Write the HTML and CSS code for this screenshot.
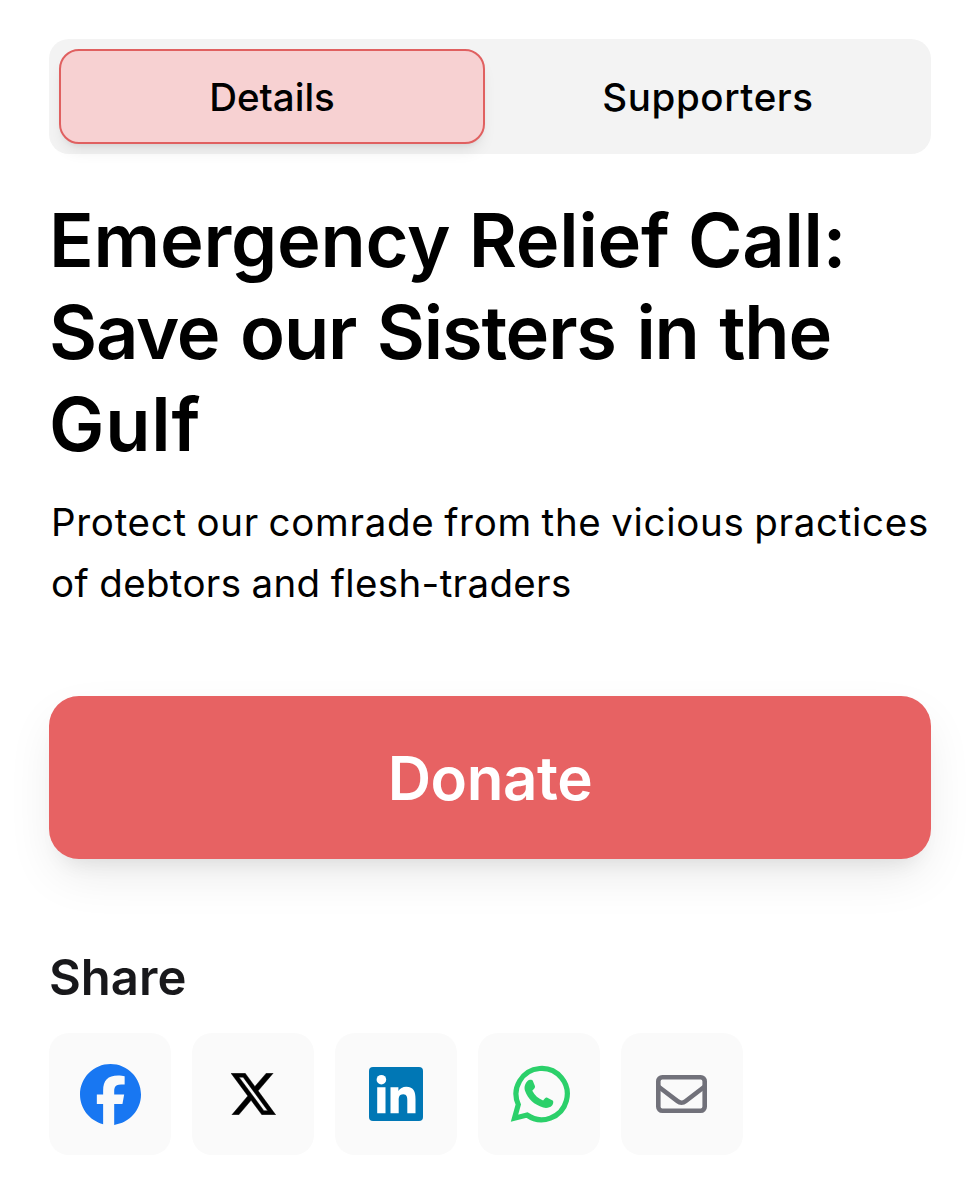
FILE: index.html
```html
<!DOCTYPE html>
<html lang="en">
<head>
  <meta charset="UTF-8">
  <title>Emergency Relief Call</title>
  <link rel="stylesheet" href="styles.css">
</head>
<body>
  <div class="tabs">
    <button class="tab active">Details</button>
    <button class="tab tab-wide">Supporters</button>
  </div>

  <h1>Emergency Relief Call:<br><span class="tight">Save our Sisters in the</span><br><span class="loose">Gulf</span></h1>
  <p class="summary">Protect our comrade from the vicious practices<br><span class="summary-end">of debtors and flesh-traders</span></p>

  <button class="donate">Donate</button>

  <h2>Share</h2>
  <div class="share-list">
    <a class="share-item" aria-label="Facebook">
      <svg width="61" height="61" viewBox="0 0 24 24" fill="#1877f2">
        <path d="M9.101 23.691v-7.98H6.627v-3.667h2.474v-1.58c0-4.085 1.848-5.978 5.858-5.978.401 0 .955.042 1.468.103a8.68 8.68 0 0 1 1.141.195v3.325a8.623 8.623 0 0 0-.653-.036 26.805 26.805 0 0 0-.733-.009c-.707 0-1.259.096-1.675.309a1.686 1.686 0 0 0-.679.622c-.258.42-.374.995-.374 1.752v1.297h3.919l-.386 2.103-.287 1.564h-3.246v8.245C19.396 23.238 24 18.179 24 12.044c0-6.627-5.373-12-12-12s-12 5.373-12 12c0 5.628 3.874 10.35 9.101 11.647Z"/>
      </svg>
    </a>
    <a class="share-item" aria-label="X">
      <svg width="45" height="42" viewBox="-1 -1 302 273" preserveAspectRatio="none">
        <path d="m236 0h46l-101 115 118 156h-92.6l-72.5-94.8-83 94.8h-46l107-123-113-148h94.9l65.5 86.6zm-16.1 244h25.5l-165-218h-27.4z" stroke="#000" stroke-width="3"/>
      </svg>
    </a>
    <a class="share-item" aria-label="LinkedIn">
      <svg width="54" height="54" viewBox="0 0 54 54">
        <rect width="54" height="54" rx="4" fill="#0077b5"/>
        <g fill="#fff">
          <circle cx="12.4" cy="12.7" r="4.8"/>
          <path d="M8.2 20.3h8.3V46.3H8.2zM21.5 20.3h7.9V24c1.5-2.6 4.3-4.2 7.8-4.2 7.7 0 9.3 5 9.3 12.2v14.3h-8.2V33.5c0-3.1-.3-6.3-4.1-6.3-3.9 0-4.5 2.9-4.5 6.1v13h-8.2z"/>
        </g>
      </svg>
    </a>
    <a class="share-item" aria-label="WhatsApp">
      <svg width="64" height="64" viewBox="0 0 64 64">
        <path d="M7.5 56.2l3.8-13.7A25.6 25.6 0 1 1 20 53z" fill="none" stroke="#2bd06a" stroke-width="5.2"/>
        <path d="M21 18.6c1-1 4.2-1.2 4.8.2l2.2 5.4c.5 1.4-1.8 3.5-2.7 4.6 2.5 4.7 6 7.8 10.8 9.7 1.3-1.4 2.6-3.4 3.8-2.9l5.7 2.8c1.2.7.7 3.9-.8 5.3-1.8 1.8-5.1 2.8-8.6 1.8C27.1 42.8 21 37.1 18 28.8c-1.3-3.9.4-7.9 3-10.2z" fill="#2bd06a"/>
      </svg>
    </a>
    <a class="share-item" aria-label="Email">
      <svg width="64" height="64" viewBox="0 0 64 64" fill="none" stroke="#71717a" stroke-width="4.6">
        <rect x="8.3" y="15.3" width="46.4" height="33.4" rx="4"/>
        <path d="M8.3 24.5L27.5 39.2a6.5 6.5 0 0 0 8 0L54.7 24.5"/>
      </svg>
    </a>
  </div>
</body>
</html>
```
FILE: styles.css
```css
* {
  box-sizing: border-box;
}

body {
  margin: 0;
  padding: 39px 49px 0;
  background: #fff;
  color: #000;
  font-family: Inter, "Liberation Sans", sans-serif;
}

button {
  border: none;
  padding: 0;
  font-family: inherit;
  color: inherit;
}

.tabs {
  display: flex;
  gap: 10px;
  height: 115px;
  padding: 10px;
  border-radius: 20px;
  background: #f3f3f3;
}

.tab {
  flex: 1;
  border: 2px solid transparent;
  border-radius: 20px;
  background: none;
  font-size: 38.5px;
  font-weight: 500;
}

.tab-wide {
  letter-spacing: 0.6px;
}

.tab.active {
  border-color: #e06060;
  background: #f7d1d2;
  box-shadow: 0 10px 15px -3px rgba(0, 0, 0, 0.08), 0 4px 6px -4px rgba(0, 0, 0, 0.1);
}

h1 {
  margin: 40px 0 0;
  font-size: 74px;
  font-weight: 600;
  line-height: 92px;
  letter-spacing: -0.25px;
  white-space: nowrap;
}

.tight {
  letter-spacing: -1.2px;
  word-spacing: 3.2px;
}

.loose {
  letter-spacing: 0.8px;
}

.summary {
  margin: 22px 0 0;
  padding-left: 2px;
  font-size: 38.5px;
  line-height: 61px;
  letter-spacing: 0.7px;
  word-spacing: -1.8px;
  white-space: nowrap;
}

.summary-end {
  letter-spacing: 0.35px;
  word-spacing: -1px;
}

.donate {
  display: block;
  width: 100%;
  height: 163px;
  margin-top: 82px;
  border-radius: 30px;
  background: #e76263;
  color: #fff;
  font-size: 60px;
  font-weight: 600;
  letter-spacing: -0.4px;
  box-shadow: 0 20px 50px -6px rgba(0, 0, 0, 0.09), 0 16px 20px -12px rgba(0, 0, 0, 0.08);
}

h2 {
  margin: 89px 0 0;
  color: #18181b;
  font-size: 49px;
  font-weight: 600;
  line-height: 60px;
}

.share-list {
  display: flex;
  gap: 21px;
  margin-top: 25px;
}

.share-item {
  display: flex;
  align-items: center;
  justify-content: center;
  width: 122px;
  height: 122px;
  border-radius: 20px;
  background: #fafafa;
}
```
